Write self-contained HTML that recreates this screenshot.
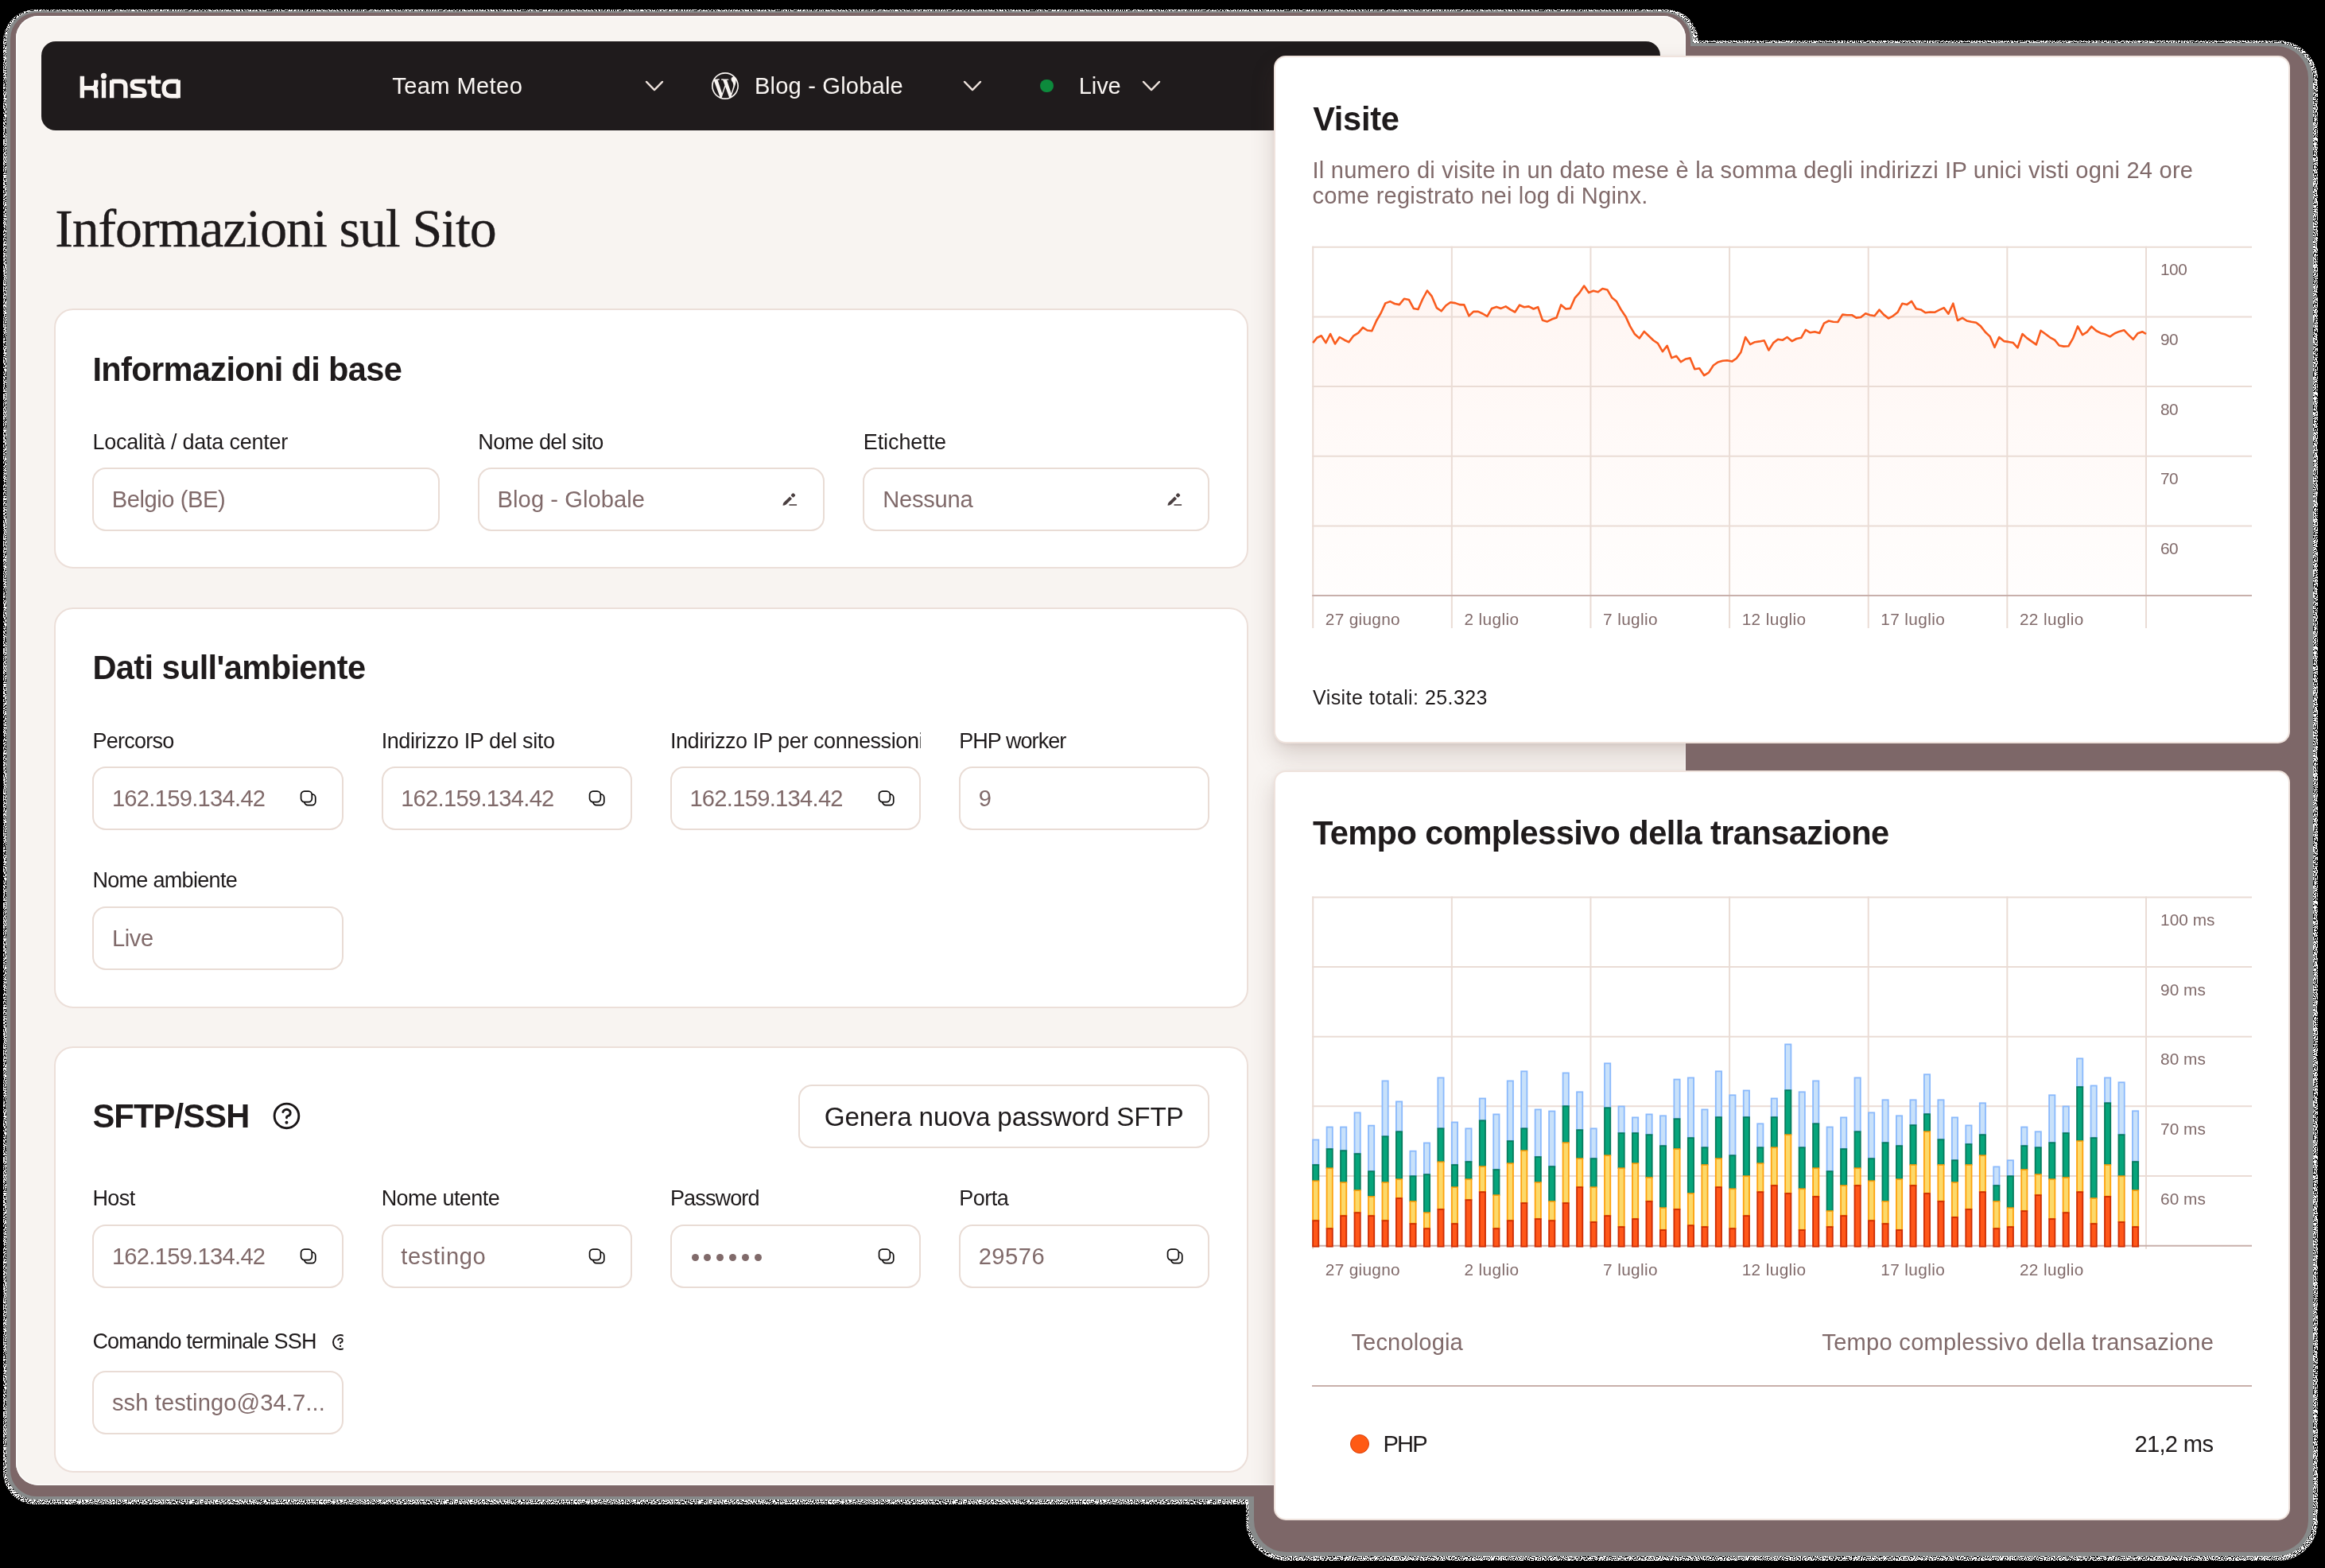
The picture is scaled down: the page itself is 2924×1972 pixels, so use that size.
<!DOCTYPE html><html><head><meta charset="utf-8"><title>Kinsta</title><style>
html,body{margin:0;padding:0;background:#000;}body{width:2924px;height:1972px;position:relative;overflow:hidden;font-family:"Liberation Sans",sans-serif;}
.a{position:absolute;display:block;box-sizing:border-box;}.t{position:absolute;white-space:nowrap;}#wrap{position:absolute;left:0;top:0;width:2924px;height:1972px;will-change:transform;}
.card{position:absolute;box-sizing:border-box;background:#fff;border:2px solid #ecdfd9;border-radius:24px;}
.inp{position:absolute;box-sizing:border-box;background:#fff;border:2px solid #e9dcd5;border-radius:17px;}
</style></head><body><div id="wrap">
<svg class="a" style="left:0;top:0" width="0" height="0"><filter id="nz" x="0" y="0" width="100%" height="100%" color-interpolation-filters="sRGB"><feTurbulence type="fractalNoise" baseFrequency="0.8" numOctaves="2" seed="7" result="t"/><feColorMatrix in="t" type="matrix" values="0 0 0 0 1 0 0 0 0 1 0 0 0 0 1 0 0 0 16 -7" result="m"/><feComposite in="m" in2="SourceGraphic" operator="in"/></filter></svg>
<div class="a" style="left:4px;top:12px;width:2132px;height:1880px;background:#fff;border-radius:40px;filter:url(#nz);"></div>
<div class="a" style="left:1567px;top:51px;width:1348px;height:1912px;background:#fff;border-radius:50px;filter:url(#nz);"></div>
<div class="a" style="left:8px;top:14px;width:2121px;height:1872px;background:#878a8a;border-radius:37px;"></div>
<div class="a" style="left:1570px;top:54px;width:1338.5px;height:1903px;background:#878a8a;border-radius:46px;"></div>
<div class="a" style="left:13px;top:16px;width:2113px;height:1866px;background:#7d6768;border-radius:33px;"></div>
<div class="a" style="left:1577px;top:58px;width:1326px;height:1894px;background:#7d6768;border-radius:40px;"></div>
<div class="a" id="panel" style="left:20px;top:20px;width:2100px;height:1848px;background:#f8f4f1;border-radius:28px;overflow:hidden;box-shadow:inset 0 0 0 1.5px #fdfcfb;">
<div class="a" id="pin" style="left:-20px;top:-20px;width:2924px;height:1972px;">
<div class="a" style="left:52px;top:52px;width:2036px;height:112px;background:#1f1b1c;border-radius:18px;"></div>
<svg class="a" style="left:90px;top:80px" width="150" height="56" viewBox="0 0 2325 868"><g fill="none" stroke="#f9f5f2" stroke-width="84" stroke-linecap="butt" stroke-linejoin="round"><path d="M207 245 V670"/><path d="M245 477 H395 Q477 477 477 395 V320"/><path d="M395 477 Q477 477 477 560 V670"/><path d="M628 320 V670"/><path d="M785 670 V320"/><path d="M785 345 H950 Q1052 345 1052 450 V670"/><path d="M1440 345 H1250 Q1180 345 1180 410 Q1180 470 1260 485 L1350 502 Q1425 517 1425 572 Q1425 630 1360 630 H1150"/><path d="M1595 235 V555 Q1595 630 1670 630 H1740"/><path d="M1480 355 H1740" stroke-width="72"/><path d="M2080 345 H1940 Q1800 345 1800 490 Q1800 632 1940 632 H2080"/><path d="M2080 320 V670"/></g><circle cx="628" cy="240" r="57" fill="#f9f5f2"/></svg>
<div class="t" style="left:493.30px;top:94.00px;font-size:29.12px;line-height:29.12px;color:#f9f5f2;font-family:'Liberation Sans',sans-serif;letter-spacing:0.374px;">Team Meteo</div>
<svg class="a" style="left:809.3px;top:98px" width="28" height="20" viewBox="-14 -10 28 20"><path d="M-10 -5.1 L0 5.1 L10 -5.1" fill="none" stroke="#eadfd9" stroke-width="2.4" stroke-linecap="round" stroke-linejoin="round"/></svg>
<svg class="a" style="left:895px;top:91px" width="34" height="34" viewBox="0 0 24 24"><path fill="#f9f5f2" d="M21.469 6.825c.84 1.537 1.318 3.3 1.318 5.175 0 3.979-2.156 7.456-5.363 9.325l3.295-9.527c.615-1.54.82-2.771.82-3.864 0-.405-.026-.78-.07-1.11m-7.981.105c.647-.03 1.232-.105 1.232-.105.582-.075.514-.93-.067-.899 0 0-1.755.135-2.88.135-1.064 0-2.85-.15-2.85-.15-.585-.03-.661.855-.075.885 0 0 .54.061 1.125.09l1.68 4.605-2.37 7.08L5.354 6.9c.649-.03 1.234-.1 1.234-.1.585-.075.516-.93-.065-.896 0 0-1.746.138-2.874.138-.2 0-.438-.008-.69-.015C4.911 3.15 8.235 1.215 12 1.215c2.809 0 5.365 1.072 7.286 2.833-.046-.003-.091-.009-.141-.009-1.06 0-1.812.923-1.812 1.914 0 .89.513 1.643 1.06 2.531.411.72.89 1.643.89 2.977 0 .915-.354 1.994-.821 3.479l-1.075 3.585-3.9-11.61.001.014zM12 22.784c-1.059 0-2.081-.153-3.048-.437l3.237-9.406 3.315 9.087c.024.053.05.101.078.149-1.12.393-2.325.609-3.582.609M1.211 12c0-1.564.336-3.05.935-4.39L7.29 21.709C3.694 19.96 1.212 16.271 1.211 12M12 0C5.385 0 0 5.385 0 12s5.385 12 12 12 12-5.385 12-12S18.615 0 12 0"/></svg>
<div class="t" style="left:949.00px;top:94.00px;font-size:29.12px;line-height:29.12px;color:#f9f5f2;font-family:'Liberation Sans',sans-serif;letter-spacing:0.173px;">Blog - Globale</div>
<svg class="a" style="left:1209.2px;top:98px" width="28" height="20" viewBox="-14 -10 28 20"><path d="M-10 -5.1 L0 5.1 L10 -5.1" fill="none" stroke="#eadfd9" stroke-width="2.4" stroke-linecap="round" stroke-linejoin="round"/></svg>
<div class="a" style="left:1308px;top:99.7px;width:16.6px;height:16.6px;background:#0d8a3c;border-radius:50%;"></div>
<div class="t" style="left:1356.70px;top:94.00px;font-size:29.12px;line-height:29.12px;color:#f9f5f2;font-family:'Liberation Sans',sans-serif;letter-spacing:-0.104px;">Live</div>
<svg class="a" style="left:1433.5px;top:98px" width="28" height="20" viewBox="-14 -10 28 20"><path d="M-10 -5.1 L0 5.1 L10 -5.1" fill="none" stroke="#eadfd9" stroke-width="2.4" stroke-linecap="round" stroke-linejoin="round"/></svg>
<div class="t" style="left:69.20px;top:253.01px;font-size:67.98px;line-height:67.98px;color:#1f1b1c;font-family:'Liberation Serif',serif;letter-spacing:-1.111px;-webkit-text-stroke:0.35px #1f1b1c;">Informazioni sul Sito</div>
<div class="card" style="left:68px;top:388px;width:1502px;height:327px;"></div>
<div class="t" style="left:116.40px;top:444.01px;font-size:41.6px;line-height:41.6px;color:#1f1b1c;font-family:'Liberation Sans',sans-serif;font-weight:700;letter-spacing:-0.663px;">Informazioni di base</div>
<div class="t" style="left:116.40px;top:543.01px;font-size:27.04px;line-height:27.04px;color:#1f1b1c;font-family:'Liberation Sans',sans-serif;letter-spacing:-0.239px;">Località / data center</div>
<div class="t" style="left:601.30px;top:543.01px;font-size:27.04px;line-height:27.04px;color:#1f1b1c;font-family:'Liberation Sans',sans-serif;letter-spacing:-0.599px;">Nome del sito</div>
<div class="t" style="left:1085.80px;top:543.01px;font-size:27.04px;line-height:27.04px;color:#1f1b1c;font-family:'Liberation Sans',sans-serif;letter-spacing:-0.11px;">Etichette</div>
<div class="inp" style="left:116.4px;top:588px;width:436.3px;height:80px;"></div>
<div class="inp" style="left:600.7px;top:588px;width:436.3px;height:80px;"></div>
<div class="inp" style="left:1085.0px;top:588px;width:436.3px;height:80px;"></div>
<div class="t" style="left:140.80px;top:614.00px;font-size:29.12px;line-height:29.12px;color:#806a6a;font-family:'Liberation Sans',sans-serif;letter-spacing:-0.435px;">Belgio (BE)</div>
<div class="t" style="left:625.60px;top:614.00px;font-size:29.12px;line-height:29.12px;color:#806a6a;font-family:'Liberation Sans',sans-serif;letter-spacing:0.073px;">Blog - Globale</div>
<div class="t" style="left:1110.20px;top:614.00px;font-size:29.12px;line-height:29.12px;color:#806a6a;font-family:'Liberation Sans',sans-serif;letter-spacing:-0.231px;">Nessuna</div>
<svg class="a" style="left:984.0px;top:619px" width="20" height="19" viewBox="0 0 20 19"><g fill="#4a3f40"><rect x="11.3" y="1.7" width="4.4" height="4.4" rx="1.1" transform="rotate(45 13.5 3.9)"/><path d="M9.3 5.5 L12 8.3 L4.7 15.4 Q2.8 16.8 0.5 16.8 Q0.5 14.6 1.6 13.0 Z"/><rect x="8.5" y="15.2" width="9.6" height="1.6"/></g></svg>
<svg class="a" style="left:1468.3px;top:619px" width="20" height="19" viewBox="0 0 20 19"><g fill="#4a3f40"><rect x="11.3" y="1.7" width="4.4" height="4.4" rx="1.1" transform="rotate(45 13.5 3.9)"/><path d="M9.3 5.5 L12 8.3 L4.7 15.4 Q2.8 16.8 0.5 16.8 Q0.5 14.6 1.6 13.0 Z"/><rect x="8.5" y="15.2" width="9.6" height="1.6"/></g></svg>
<div class="card" style="left:68px;top:764px;width:1502px;height:504px;"></div>
<div class="t" style="left:116.40px;top:819.01px;font-size:41.6px;line-height:41.6px;color:#1f1b1c;font-family:'Liberation Sans',sans-serif;font-weight:700;letter-spacing:-0.627px;">Dati sull'ambiente</div>
<div class="t" style="left:116.40px;top:919.01px;font-size:27.04px;line-height:27.04px;color:#1f1b1c;font-family:'Liberation Sans',sans-serif;letter-spacing:-0.74px;">Percorso</div>
<div class="t" style="left:479.65px;top:919.01px;font-size:27.04px;line-height:27.04px;color:#1f1b1c;font-family:'Liberation Sans',sans-serif;letter-spacing:-0.405px;">Indirizzo IP del sito</div>
<div class="t" style="left:842.90px;top:919.01px;font-size:27.04px;line-height:27.04px;color:#1f1b1c;font-family:'Liberation Sans',sans-serif;letter-spacing:-0.424px;width:315.25px;overflow:hidden;">Indirizzo IP per connessioni</div>
<div class="t" style="left:1206.15px;top:919.01px;font-size:27.04px;line-height:27.04px;color:#1f1b1c;font-family:'Liberation Sans',sans-serif;letter-spacing:-0.953px;">PHP worker</div>
<div class="inp" style="left:116.4px;top:964px;width:315.25px;height:80px;"></div>
<div class="inp" style="left:479.65px;top:964px;width:315.25px;height:80px;"></div>
<div class="inp" style="left:842.9px;top:964px;width:315.25px;height:80px;"></div>
<div class="inp" style="left:1206.15px;top:964px;width:315.25px;height:80px;"></div>
<div class="t" style="left:140.90px;top:990.00px;font-size:29.12px;line-height:29.12px;color:#806a6a;font-family:'Liberation Sans',sans-serif;letter-spacing:-0.706px;">162.159.134.42</div>
<svg class="a" style="left:377.0px;top:993px" width="22" height="22" viewBox="0 0 22 22"><g fill="#fff" stroke="#0d0b0b" stroke-width="1.7"><rect x="5.8" y="5.95" width="13.95" height="13.7" rx="4.3"/><rect x="1.55" y="2.05" width="13.75" height="13.6" rx="4.3"/></g></svg>
<div class="t" style="left:504.15px;top:990.00px;font-size:29.12px;line-height:29.12px;color:#806a6a;font-family:'Liberation Sans',sans-serif;letter-spacing:-0.706px;">162.159.134.42</div>
<svg class="a" style="left:740.25px;top:993px" width="22" height="22" viewBox="0 0 22 22"><g fill="#fff" stroke="#0d0b0b" stroke-width="1.7"><rect x="5.8" y="5.95" width="13.95" height="13.7" rx="4.3"/><rect x="1.55" y="2.05" width="13.75" height="13.6" rx="4.3"/></g></svg>
<div class="t" style="left:867.40px;top:990.00px;font-size:29.12px;line-height:29.12px;color:#806a6a;font-family:'Liberation Sans',sans-serif;letter-spacing:-0.706px;">162.159.134.42</div>
<svg class="a" style="left:1103.5px;top:993px" width="22" height="22" viewBox="0 0 22 22"><g fill="#fff" stroke="#0d0b0b" stroke-width="1.7"><rect x="5.8" y="5.95" width="13.95" height="13.7" rx="4.3"/><rect x="1.55" y="2.05" width="13.75" height="13.6" rx="4.3"/></g></svg>
<div class="t" style="left:1230.65px;top:990.00px;font-size:29.12px;line-height:29.12px;color:#806a6a;font-family:'Liberation Sans',sans-serif;letter-spacing:-0.623px;">9</div>
<div class="t" style="left:116.40px;top:1094.01px;font-size:27.04px;line-height:27.04px;color:#1f1b1c;font-family:'Liberation Sans',sans-serif;letter-spacing:-0.705px;">Nome ambiente</div>
<div class="inp" style="left:116.4px;top:1140px;width:315.25px;height:80px;"></div>
<div class="t" style="left:140.90px;top:1166.00px;font-size:29.12px;line-height:29.12px;color:#806a6a;font-family:'Liberation Sans',sans-serif;letter-spacing:-0.374px;">Live</div>
<div class="card" style="left:68px;top:1316px;width:1502px;height:536px;"></div>
<div class="t" style="left:116.40px;top:1383.01px;font-size:41.6px;line-height:41.6px;color:#1f1b1c;font-family:'Liberation Sans',sans-serif;font-weight:700;letter-spacing:-0.798px;">SFTP/SSH</div>
<svg class="a" style="left:339.63px;top:1383.43px;" width="40.93" height="40.93" viewBox="-128 -128 256 256" fill="none" stroke="#1a1617" stroke-width="18.14" stroke-linecap="round" stroke-linejoin="round"><circle cx="0" cy="0" r="96"/><path d="M-29 -31A30 27 0 1 1 20 -4C8 1 0 0 0 9L0 14"/><circle cx="0" cy="52" r="12.5" fill="#1a1617" stroke="none"/></svg>
<div class="inp" style="left:1004px;top:1364px;width:517.4px;height:80px;border-radius:17px;"></div>
<div class="t" style="left:1036.70px;top:1388.00px;font-size:33.28px;line-height:33.28px;color:#1f1b1c;font-family:'Liberation Sans',sans-serif;letter-spacing:-0.186px;">Genera nuova password SFTP</div>
<div class="t" style="left:116.40px;top:1494.01px;font-size:27.04px;line-height:27.04px;color:#1f1b1c;font-family:'Liberation Sans',sans-serif;letter-spacing:-0.585px;">Host</div>
<div class="t" style="left:479.65px;top:1494.01px;font-size:27.04px;line-height:27.04px;color:#1f1b1c;font-family:'Liberation Sans',sans-serif;letter-spacing:-0.561px;">Nome utente</div>
<div class="t" style="left:842.90px;top:1494.01px;font-size:27.04px;line-height:27.04px;color:#1f1b1c;font-family:'Liberation Sans',sans-serif;letter-spacing:-0.861px;">Password</div>
<div class="t" style="left:1206.15px;top:1494.01px;font-size:27.04px;line-height:27.04px;color:#1f1b1c;font-family:'Liberation Sans',sans-serif;letter-spacing:-0.507px;">Porta</div>
<div class="inp" style="left:116.4px;top:1540px;width:315.25px;height:80px;"></div>
<div class="inp" style="left:479.65px;top:1540px;width:315.25px;height:80px;"></div>
<div class="inp" style="left:842.9px;top:1540px;width:315.25px;height:80px;"></div>
<div class="inp" style="left:1206.15px;top:1540px;width:315.25px;height:80px;"></div>
<div class="t" style="left:140.90px;top:1566.00px;font-size:29.12px;line-height:29.12px;color:#806a6a;font-family:'Liberation Sans',sans-serif;letter-spacing:-0.706px;">162.159.134.42</div>
<div class="t" style="left:504.15px;top:1566.00px;font-size:29.12px;line-height:29.12px;color:#806a6a;font-family:'Liberation Sans',sans-serif;letter-spacing:0.67px;">testingo</div>
<div class="a" style="left:869.6px;top:1577.3px;width:9px;height:9px;background:#806a6a;border-radius:50%;"></div>
<div class="a" style="left:885.44px;top:1577.3px;width:9px;height:9px;background:#806a6a;border-radius:50%;"></div>
<div class="a" style="left:901.28px;top:1577.3px;width:9px;height:9px;background:#806a6a;border-radius:50%;"></div>
<div class="a" style="left:917.12px;top:1577.3px;width:9px;height:9px;background:#806a6a;border-radius:50%;"></div>
<div class="a" style="left:932.96px;top:1577.3px;width:9px;height:9px;background:#806a6a;border-radius:50%;"></div>
<div class="a" style="left:948.8000000000001px;top:1577.3px;width:9px;height:9px;background:#806a6a;border-radius:50%;"></div>
<div class="t" style="left:1230.65px;top:1566.00px;font-size:29.12px;line-height:29.12px;color:#806a6a;font-family:'Liberation Sans',sans-serif;letter-spacing:0.537px;">29576</div>
<svg class="a" style="left:377.0px;top:1568.5px" width="22" height="22" viewBox="0 0 22 22"><g fill="#fff" stroke="#0d0b0b" stroke-width="1.7"><rect x="5.8" y="5.95" width="13.95" height="13.7" rx="4.3"/><rect x="1.55" y="2.05" width="13.75" height="13.6" rx="4.3"/></g></svg>
<svg class="a" style="left:740.25px;top:1568.5px" width="22" height="22" viewBox="0 0 22 22"><g fill="#fff" stroke="#0d0b0b" stroke-width="1.7"><rect x="5.8" y="5.95" width="13.95" height="13.7" rx="4.3"/><rect x="1.55" y="2.05" width="13.75" height="13.6" rx="4.3"/></g></svg>
<svg class="a" style="left:1103.5px;top:1568.5px" width="22" height="22" viewBox="0 0 22 22"><g fill="#fff" stroke="#0d0b0b" stroke-width="1.7"><rect x="5.8" y="5.95" width="13.95" height="13.7" rx="4.3"/><rect x="1.55" y="2.05" width="13.75" height="13.6" rx="4.3"/></g></svg>
<svg class="a" style="left:1466.75px;top:1568.5px" width="22" height="22" viewBox="0 0 22 22"><g fill="#fff" stroke="#0d0b0b" stroke-width="1.7"><rect x="5.8" y="5.95" width="13.95" height="13.7" rx="4.3"/><rect x="1.55" y="2.05" width="13.75" height="13.6" rx="4.3"/></g></svg>
<div class="t" style="left:116.40px;top:1674.01px;font-size:27.04px;line-height:27.04px;color:#1f1b1c;font-family:'Liberation Sans',sans-serif;letter-spacing:-0.848px;">Comando terminale SSH</div>
<svg class="a" style="left:415.90px;top:1675.85px;clip-path:inset(0 8.20px 0 0);" width="24.00" height="24.00" viewBox="-128 -128 256 256" fill="none" stroke="#1a1617" stroke-width="21.33" stroke-linecap="round" stroke-linejoin="round"><circle cx="0" cy="0" r="96"/><path d="M-29 -31A30 27 0 1 1 20 -4C8 1 0 0 0 9L0 14"/><circle cx="0" cy="52" r="12.5" fill="#1a1617" stroke="none"/></svg>
<div class="inp" style="left:116.4px;top:1723.7px;width:315.25px;height:80px;"></div>
<div class="t" style="left:140.90px;top:1750.00px;font-size:29.12px;line-height:29.12px;color:#806a6a;font-family:'Liberation Sans',sans-serif;letter-spacing:0.109px;">ssh testingo@34.7...</div>
</div></div>
<div class="a" style="left:20px;top:20px;width:2100px;height:1848px;border-radius:28px;overflow:hidden;pointer-events:none;">
<div class="a" style="left:-20px;top:-20px;width:2924px;height:1972px;">
<div class="a" style="left:1603px;top:71px;width:1276px;height:863px;border-radius:14px;box-shadow:0 14px 30px rgba(96,62,56,0.22),0 2px 6px rgba(96,62,56,0.10);"></div>
<div class="a" style="left:1603px;top:970px;width:1276px;height:941px;border-radius:14px;box-shadow:0 14px 30px rgba(96,62,56,0.22),0 2px 6px rgba(96,62,56,0.10);"></div>
</div></div>
<div class="card" style="left:1602px;top:70px;width:1278px;height:865px;border-color:#efe3dd;border-radius:15px;"></div>
<div class="card" style="left:1602px;top:969px;width:1278px;height:943px;border-color:#efe3dd;border-radius:15px;"></div>
<div class="t" style="left:1651.20px;top:129.01px;font-size:41.6px;line-height:41.6px;color:#1f1b1c;font-family:'Liberation Sans',sans-serif;font-weight:700;letter-spacing:-0.307px;">Visite</div>
<div class="t" style="left:1650.50px;top:200.00px;font-size:29.12px;line-height:29.12px;color:#806a6a;font-family:'Liberation Sans',sans-serif;letter-spacing:0.199px;">Il numero di visite in un dato mese è la somma degli indirizzi IP unici visti ogni 24 ore</div>
<div class="t" style="left:1650.50px;top:232.00px;font-size:29.12px;line-height:29.12px;color:#806a6a;font-family:'Liberation Sans',sans-serif;letter-spacing:0.185px;">come registrato nei log di Nginx.</div>
<svg class="a" style="left:0;top:0" width="2924" height="1972" viewBox="0 0 2924 1972">
<defs><linearGradient id="lg" x1="0" y1="0" x2="0" y2="1"><stop offset="0" stop-color="#ff5a1f" stop-opacity="0.055"/><stop offset="1" stop-color="#ff5a1f" stop-opacity="0.01"/></linearGradient></defs>
<polygon points="1651.2,431.1 1656.3,424.8 1661.7,422.3 1667.4,431.1 1673.1,420.0 1679.0,432.5 1684.7,424.0 1691.0,427.7 1696.4,430.2 1702.3,422.3 1708.3,418.6 1714.0,411.8 1719.6,415.5 1725.3,416.3 1731.0,403.5 1736.4,394.2 1742.3,381.4 1748.3,379.1 1754.0,382.0 1759.9,383.1 1765.9,375.7 1771.9,376.9 1777.8,387.9 1783.5,389.1 1789.2,376.0 1794.9,365.5 1800.5,372.3 1806.8,387.1 1812.7,391.3 1818.4,384.2 1824.1,380.3 1830.1,381.1 1835.7,383.1 1841.4,383.4 1847.4,397.3 1853.1,391.9 1859.0,391.9 1864.7,394.5 1870.4,397.9 1876.1,387.9 1882.0,385.9 1887.7,387.9 1893.7,385.4 1899.6,389.4 1905.3,392.5 1911.0,383.7 1916.9,386.2 1922.6,385.4 1928.6,388.5 1934.2,386.2 1939.9,402.7 1945.9,404.4 1951.6,401.6 1957.5,399.6 1963.2,383.4 1969.2,388.5 1974.8,387.9 1980.5,374.9 1986.5,368.1 1992.2,359.5 1998.1,368.1 2003.8,365.8 2009.8,367.2 2015.4,363.0 2021.4,364.4 2027.4,374.6 2033.0,379.1 2038.7,389.6 2044.4,397.9 2050.1,410.4 2056.0,420.3 2061.7,425.4 2067.7,416.9 2073.3,422.3 2079.3,428.0 2085.0,431.9 2090.9,442.2 2096.6,434.8 2102.3,450.1 2108.3,447.8 2113.9,455.2 2119.9,451.5 2125.6,450.4 2131.3,464.3 2137.2,463.2 2143.2,472.2 2148.9,468.6 2154.8,459.5 2160.5,455.5 2166.5,453.8 2172.1,453.2 2178.1,454.6 2183.8,450.7 2189.4,443.0 2195.1,424.0 2201.1,433.1 2207.0,430.2 2212.7,429.4 2218.7,428.2 2224.4,440.5 2230.3,431.1 2236.0,426.8 2242.0,427.7 2247.6,424.0 2253.6,429.1 2259.3,426.0 2265.2,424.8 2270.9,414.9 2276.6,418.3 2282.3,417.2 2288.3,418.9 2293.9,406.7 2299.9,403.5 2305.6,404.7 2311.3,405.0 2317.2,395.6 2322.9,396.2 2328.9,396.2 2334.5,399.6 2340.2,399.0 2346.2,394.2 2351.8,396.2 2357.5,397.3 2363.5,389.6 2369.2,395.9 2375.1,400.4 2380.8,397.3 2386.5,392.8 2392.4,381.7 2398.1,383.1 2404.1,378.9 2409.8,388.2 2415.7,389.4 2421.4,393.3 2427.4,392.5 2433.0,392.8 2438.7,389.9 2444.7,387.1 2450.4,394.7 2456.3,381.7 2462.0,403.0 2468.0,399.9 2473.6,403.5 2479.3,404.7 2485.3,405.8 2490.9,410.1 2496.9,417.7 2502.6,423.1 2508.5,436.8 2514.2,424.0 2520.2,429.1 2525.9,429.9 2531.8,431.1 2537.5,437.3 2543.5,420.0 2549.1,425.1 2555.1,429.4 2560.8,433.4 2566.5,415.8 2572.4,420.0 2578.1,424.3 2584.1,427.7 2589.7,434.5 2595.4,435.6 2601.4,435.3 2607.0,425.7 2613.0,410.4 2619.0,421.1 2624.6,417.7 2630.3,410.6 2636.3,416.0 2642.0,418.9 2647.6,420.6 2653.6,423.4 2659.6,419.2 2665.2,416.9 2671.2,415.2 2676.9,421.1 2682.8,426.8 2688.5,419.2 2694.2,417.2 2699.0,420.0 2699,749.0 1651.2,749.0" fill="url(#lg)"/>
<line x1="1650.2" y1="310.80" x2="2832" y2="310.80" stroke="#eadcd5" stroke-width="2"/><line x1="1650.2" y1="398.45" x2="2832" y2="398.45" stroke="#eadcd5" stroke-width="2"/><line x1="1650.2" y1="486.10" x2="2832" y2="486.10" stroke="#eadcd5" stroke-width="2"/><line x1="1650.2" y1="573.75" x2="2832" y2="573.75" stroke="#eadcd5" stroke-width="2"/><line x1="1650.2" y1="661.40" x2="2832" y2="661.40" stroke="#eadcd5" stroke-width="2"/><line x1="1651.20" y1="309.80" x2="1651.20" y2="790.05" stroke="#eadcd5" stroke-width="2"/><line x1="1825.83" y1="309.80" x2="1825.83" y2="790.05" stroke="#eadcd5" stroke-width="2"/><line x1="2000.46" y1="309.80" x2="2000.46" y2="790.05" stroke="#eadcd5" stroke-width="2"/><line x1="2175.09" y1="309.80" x2="2175.09" y2="790.05" stroke="#eadcd5" stroke-width="2"/><line x1="2349.72" y1="309.80" x2="2349.72" y2="790.05" stroke="#eadcd5" stroke-width="2"/><line x1="2524.35" y1="309.80" x2="2524.35" y2="790.05" stroke="#eadcd5" stroke-width="2"/><line x1="2698.98" y1="309.80" x2="2698.98" y2="790.05" stroke="#eadcd5" stroke-width="2"/><line x1="1650.2" y1="749.05" x2="2832" y2="749.05" stroke="#c8b0ab" stroke-width="2"/>
<polyline points="1651.2,431.1 1656.3,424.8 1661.7,422.3 1667.4,431.1 1673.1,420.0 1679.0,432.5 1684.7,424.0 1691.0,427.7 1696.4,430.2 1702.3,422.3 1708.3,418.6 1714.0,411.8 1719.6,415.5 1725.3,416.3 1731.0,403.5 1736.4,394.2 1742.3,381.4 1748.3,379.1 1754.0,382.0 1759.9,383.1 1765.9,375.7 1771.9,376.9 1777.8,387.9 1783.5,389.1 1789.2,376.0 1794.9,365.5 1800.5,372.3 1806.8,387.1 1812.7,391.3 1818.4,384.2 1824.1,380.3 1830.1,381.1 1835.7,383.1 1841.4,383.4 1847.4,397.3 1853.1,391.9 1859.0,391.9 1864.7,394.5 1870.4,397.9 1876.1,387.9 1882.0,385.9 1887.7,387.9 1893.7,385.4 1899.6,389.4 1905.3,392.5 1911.0,383.7 1916.9,386.2 1922.6,385.4 1928.6,388.5 1934.2,386.2 1939.9,402.7 1945.9,404.4 1951.6,401.6 1957.5,399.6 1963.2,383.4 1969.2,388.5 1974.8,387.9 1980.5,374.9 1986.5,368.1 1992.2,359.5 1998.1,368.1 2003.8,365.8 2009.8,367.2 2015.4,363.0 2021.4,364.4 2027.4,374.6 2033.0,379.1 2038.7,389.6 2044.4,397.9 2050.1,410.4 2056.0,420.3 2061.7,425.4 2067.7,416.9 2073.3,422.3 2079.3,428.0 2085.0,431.9 2090.9,442.2 2096.6,434.8 2102.3,450.1 2108.3,447.8 2113.9,455.2 2119.9,451.5 2125.6,450.4 2131.3,464.3 2137.2,463.2 2143.2,472.2 2148.9,468.6 2154.8,459.5 2160.5,455.5 2166.5,453.8 2172.1,453.2 2178.1,454.6 2183.8,450.7 2189.4,443.0 2195.1,424.0 2201.1,433.1 2207.0,430.2 2212.7,429.4 2218.7,428.2 2224.4,440.5 2230.3,431.1 2236.0,426.8 2242.0,427.7 2247.6,424.0 2253.6,429.1 2259.3,426.0 2265.2,424.8 2270.9,414.9 2276.6,418.3 2282.3,417.2 2288.3,418.9 2293.9,406.7 2299.9,403.5 2305.6,404.7 2311.3,405.0 2317.2,395.6 2322.9,396.2 2328.9,396.2 2334.5,399.6 2340.2,399.0 2346.2,394.2 2351.8,396.2 2357.5,397.3 2363.5,389.6 2369.2,395.9 2375.1,400.4 2380.8,397.3 2386.5,392.8 2392.4,381.7 2398.1,383.1 2404.1,378.9 2409.8,388.2 2415.7,389.4 2421.4,393.3 2427.4,392.5 2433.0,392.8 2438.7,389.9 2444.7,387.1 2450.4,394.7 2456.3,381.7 2462.0,403.0 2468.0,399.9 2473.6,403.5 2479.3,404.7 2485.3,405.8 2490.9,410.1 2496.9,417.7 2502.6,423.1 2508.5,436.8 2514.2,424.0 2520.2,429.1 2525.9,429.9 2531.8,431.1 2537.5,437.3 2543.5,420.0 2549.1,425.1 2555.1,429.4 2560.8,433.4 2566.5,415.8 2572.4,420.0 2578.1,424.3 2584.1,427.7 2589.7,434.5 2595.4,435.6 2601.4,435.3 2607.0,425.7 2613.0,410.4 2619.0,421.1 2624.6,417.7 2630.3,410.6 2636.3,416.0 2642.0,418.9 2647.6,420.6 2653.6,423.4 2659.6,419.2 2665.2,416.9 2671.2,415.2 2676.9,421.1 2682.8,426.8 2688.5,419.2 2694.2,417.2 2699.0,420.0" fill="none" stroke="#f95c1e" stroke-width="2.6" stroke-linejoin="round" stroke-linecap="butt"/>
<line x1="1650.2" y1="1128.40" x2="2832" y2="1128.40" stroke="#eadcd5" stroke-width="2"/><line x1="1650.2" y1="1216.05" x2="2832" y2="1216.05" stroke="#eadcd5" stroke-width="2"/><line x1="1650.2" y1="1303.70" x2="2832" y2="1303.70" stroke="#eadcd5" stroke-width="2"/><line x1="1650.2" y1="1391.35" x2="2832" y2="1391.35" stroke="#eadcd5" stroke-width="2"/><line x1="1650.2" y1="1479.00" x2="2832" y2="1479.00" stroke="#eadcd5" stroke-width="2"/><line x1="1651.20" y1="1127.40" x2="1651.20" y2="1570.65" stroke="#eadcd5" stroke-width="2"/><line x1="1825.83" y1="1127.40" x2="1825.83" y2="1570.65" stroke="#eadcd5" stroke-width="2"/><line x1="2000.46" y1="1127.40" x2="2000.46" y2="1570.65" stroke="#eadcd5" stroke-width="2"/><line x1="2175.09" y1="1127.40" x2="2175.09" y2="1570.65" stroke="#eadcd5" stroke-width="2"/><line x1="2349.72" y1="1127.40" x2="2349.72" y2="1570.65" stroke="#eadcd5" stroke-width="2"/><line x1="2524.35" y1="1127.40" x2="2524.35" y2="1570.65" stroke="#eadcd5" stroke-width="2"/><line x1="2698.98" y1="1127.40" x2="2698.98" y2="1570.65" stroke="#eadcd5" stroke-width="2"/><line x1="1650.2" y1="1566.65" x2="2832" y2="1566.65" stroke="#c8b0ab" stroke-width="2"/>
<rect x="1651.10" y="1433.50" width="7.25" height="31.19" fill="#c8e1fa" stroke="#8ab9fc" stroke-width="1.8"/>
<rect x="1651.10" y="1465.09" width="7.25" height="19.81" fill="#06a57b" stroke="#067b5d" stroke-width="1.8"/>
<rect x="1651.10" y="1485.30" width="7.25" height="49.53" fill="#fcd96a" stroke="#fda20e" stroke-width="1.8"/>
<rect x="1651.10" y="1535.23" width="7.25" height="32.47" fill="#ff5719" stroke="#cd2c02" stroke-width="1.8"/>
<rect x="1668.57" y="1417.48" width="7.25" height="27.24" fill="#c8e1fa" stroke="#8ab9fc" stroke-width="1.8"/>
<rect x="1668.57" y="1445.12" width="7.25" height="23.75" fill="#06a57b" stroke="#067b5d" stroke-width="1.8"/>
<rect x="1668.57" y="1469.27" width="7.25" height="75.55" fill="#fcd96a" stroke="#fda20e" stroke-width="1.8"/>
<rect x="1668.57" y="1545.22" width="7.25" height="22.48" fill="#ff5719" stroke="#cd2c02" stroke-width="1.8"/>
<rect x="1686.04" y="1417.48" width="7.25" height="29.33" fill="#c8e1fa" stroke="#8ab9fc" stroke-width="1.8"/>
<rect x="1686.04" y="1447.21" width="7.25" height="39.55" fill="#06a57b" stroke="#067b5d" stroke-width="1.8"/>
<rect x="1686.04" y="1487.16" width="7.25" height="41.64" fill="#fcd96a" stroke="#fda20e" stroke-width="1.8"/>
<rect x="1686.04" y="1529.19" width="7.25" height="38.51" fill="#ff5719" stroke="#cd2c02" stroke-width="1.8"/>
<rect x="1703.52" y="1399.36" width="7.25" height="51.39" fill="#c8e1fa" stroke="#8ab9fc" stroke-width="1.8"/>
<rect x="1703.52" y="1451.16" width="7.25" height="45.59" fill="#06a57b" stroke="#067b5d" stroke-width="1.8"/>
<rect x="1703.52" y="1497.14" width="7.25" height="27.70" fill="#fcd96a" stroke="#fda20e" stroke-width="1.8"/>
<rect x="1703.52" y="1525.25" width="7.25" height="42.45" fill="#ff5719" stroke="#cd2c02" stroke-width="1.8"/>
<rect x="1720.99" y="1415.62" width="7.25" height="57.20" fill="#c8e1fa" stroke="#8ab9fc" stroke-width="1.8"/>
<rect x="1720.99" y="1473.22" width="7.25" height="31.42" fill="#06a57b" stroke="#067b5d" stroke-width="1.8"/>
<rect x="1720.99" y="1505.04" width="7.25" height="23.75" fill="#fcd96a" stroke="#fda20e" stroke-width="1.8"/>
<rect x="1720.99" y="1529.19" width="7.25" height="38.51" fill="#ff5719" stroke="#cd2c02" stroke-width="1.8"/>
<rect x="1738.46" y="1359.42" width="7.25" height="69.51" fill="#c8e1fa" stroke="#8ab9fc" stroke-width="1.8"/>
<rect x="1738.46" y="1429.32" width="7.25" height="57.43" fill="#06a57b" stroke="#067b5d" stroke-width="1.8"/>
<rect x="1738.46" y="1487.16" width="7.25" height="47.68" fill="#fcd96a" stroke="#fda20e" stroke-width="1.8"/>
<rect x="1738.46" y="1535.23" width="7.25" height="32.47" fill="#ff5719" stroke="#cd2c02" stroke-width="1.8"/>
<rect x="1755.93" y="1385.43" width="7.25" height="37.46" fill="#c8e1fa" stroke="#8ab9fc" stroke-width="1.8"/>
<rect x="1755.93" y="1423.29" width="7.25" height="59.52" fill="#06a57b" stroke="#067b5d" stroke-width="1.8"/>
<rect x="1755.93" y="1483.21" width="7.25" height="23.52" fill="#fcd96a" stroke="#fda20e" stroke-width="1.8"/>
<rect x="1755.93" y="1507.13" width="7.25" height="60.57" fill="#ff5719" stroke="#cd2c02" stroke-width="1.8"/>
<rect x="1773.40" y="1447.67" width="7.25" height="31.19" fill="#c8e1fa" stroke="#8ab9fc" stroke-width="1.8"/>
<rect x="1773.40" y="1479.26" width="7.25" height="31.42" fill="#06a57b" stroke="#067b5d" stroke-width="1.8"/>
<rect x="1773.40" y="1511.08" width="7.25" height="27.70" fill="#fcd96a" stroke="#fda20e" stroke-width="1.8"/>
<rect x="1773.40" y="1539.18" width="7.25" height="28.52" fill="#ff5719" stroke="#cd2c02" stroke-width="1.8"/>
<rect x="1790.88" y="1437.45" width="7.25" height="39.32" fill="#c8e1fa" stroke="#8ab9fc" stroke-width="1.8"/>
<rect x="1790.88" y="1477.17" width="7.25" height="47.68" fill="#06a57b" stroke="#067b5d" stroke-width="1.8"/>
<rect x="1790.88" y="1525.25" width="7.25" height="19.57" fill="#fcd96a" stroke="#fda20e" stroke-width="1.8"/>
<rect x="1790.88" y="1545.22" width="7.25" height="22.48" fill="#ff5719" stroke="#cd2c02" stroke-width="1.8"/>
<rect x="1808.35" y="1355.47" width="7.25" height="63.47" fill="#c8e1fa" stroke="#8ab9fc" stroke-width="1.8"/>
<rect x="1808.35" y="1419.34" width="7.25" height="41.64" fill="#06a57b" stroke="#067b5d" stroke-width="1.8"/>
<rect x="1808.35" y="1461.38" width="7.25" height="59.29" fill="#fcd96a" stroke="#fda20e" stroke-width="1.8"/>
<rect x="1808.35" y="1521.07" width="7.25" height="46.63" fill="#ff5719" stroke="#cd2c02" stroke-width="1.8"/>
<rect x="1825.82" y="1411.44" width="7.25" height="53.25" fill="#c8e1fa" stroke="#8ab9fc" stroke-width="1.8"/>
<rect x="1825.82" y="1465.09" width="7.25" height="27.70" fill="#06a57b" stroke="#067b5d" stroke-width="1.8"/>
<rect x="1825.82" y="1493.19" width="7.25" height="45.59" fill="#fcd96a" stroke="#fda20e" stroke-width="1.8"/>
<rect x="1825.82" y="1539.18" width="7.25" height="28.52" fill="#ff5719" stroke="#cd2c02" stroke-width="1.8"/>
<rect x="1843.29" y="1419.34" width="7.25" height="41.41" fill="#c8e1fa" stroke="#8ab9fc" stroke-width="1.8"/>
<rect x="1843.29" y="1461.14" width="7.25" height="21.66" fill="#06a57b" stroke="#067b5d" stroke-width="1.8"/>
<rect x="1843.29" y="1483.21" width="7.25" height="25.61" fill="#fcd96a" stroke="#fda20e" stroke-width="1.8"/>
<rect x="1843.29" y="1509.22" width="7.25" height="58.48" fill="#ff5719" stroke="#cd2c02" stroke-width="1.8"/>
<rect x="1860.76" y="1381.48" width="7.25" height="27.47" fill="#c8e1fa" stroke="#8ab9fc" stroke-width="1.8"/>
<rect x="1860.76" y="1409.35" width="7.25" height="57.43" fill="#06a57b" stroke="#067b5d" stroke-width="1.8"/>
<rect x="1860.76" y="1467.18" width="7.25" height="31.65" fill="#fcd96a" stroke="#fda20e" stroke-width="1.8"/>
<rect x="1860.76" y="1499.23" width="7.25" height="68.47" fill="#ff5719" stroke="#cd2c02" stroke-width="1.8"/>
<rect x="1878.24" y="1401.45" width="7.25" height="69.28" fill="#c8e1fa" stroke="#8ab9fc" stroke-width="1.8"/>
<rect x="1878.24" y="1471.13" width="7.25" height="31.65" fill="#06a57b" stroke="#067b5d" stroke-width="1.8"/>
<rect x="1878.24" y="1503.18" width="7.25" height="41.64" fill="#fcd96a" stroke="#fda20e" stroke-width="1.8"/>
<rect x="1878.24" y="1545.22" width="7.25" height="22.48" fill="#ff5719" stroke="#cd2c02" stroke-width="1.8"/>
<rect x="1895.71" y="1359.42" width="7.25" height="75.32" fill="#c8e1fa" stroke="#8ab9fc" stroke-width="1.8"/>
<rect x="1895.71" y="1435.13" width="7.25" height="27.70" fill="#06a57b" stroke="#067b5d" stroke-width="1.8"/>
<rect x="1895.71" y="1463.23" width="7.25" height="71.60" fill="#fcd96a" stroke="#fda20e" stroke-width="1.8"/>
<rect x="1895.71" y="1535.23" width="7.25" height="32.47" fill="#ff5719" stroke="#cd2c02" stroke-width="1.8"/>
<rect x="1913.18" y="1347.34" width="7.25" height="71.60" fill="#c8e1fa" stroke="#8ab9fc" stroke-width="1.8"/>
<rect x="1913.18" y="1419.34" width="7.25" height="27.47" fill="#06a57b" stroke="#067b5d" stroke-width="1.8"/>
<rect x="1913.18" y="1447.21" width="7.25" height="65.56" fill="#fcd96a" stroke="#fda20e" stroke-width="1.8"/>
<rect x="1913.18" y="1513.17" width="7.25" height="54.53" fill="#ff5719" stroke="#cd2c02" stroke-width="1.8"/>
<rect x="1930.65" y="1395.42" width="7.25" height="59.29" fill="#c8e1fa" stroke="#8ab9fc" stroke-width="1.8"/>
<rect x="1930.65" y="1455.10" width="7.25" height="31.65" fill="#06a57b" stroke="#067b5d" stroke-width="1.8"/>
<rect x="1930.65" y="1487.16" width="7.25" height="45.59" fill="#fcd96a" stroke="#fda20e" stroke-width="1.8"/>
<rect x="1930.65" y="1533.14" width="7.25" height="34.56" fill="#ff5719" stroke="#cd2c02" stroke-width="1.8"/>
<rect x="1948.12" y="1397.51" width="7.25" height="69.28" fill="#c8e1fa" stroke="#8ab9fc" stroke-width="1.8"/>
<rect x="1948.12" y="1467.18" width="7.25" height="43.50" fill="#06a57b" stroke="#067b5d" stroke-width="1.8"/>
<rect x="1948.12" y="1511.08" width="7.25" height="23.75" fill="#fcd96a" stroke="#fda20e" stroke-width="1.8"/>
<rect x="1948.12" y="1535.23" width="7.25" height="32.47" fill="#ff5719" stroke="#cd2c02" stroke-width="1.8"/>
<rect x="1965.60" y="1349.43" width="7.25" height="41.41" fill="#c8e1fa" stroke="#8ab9fc" stroke-width="1.8"/>
<rect x="1965.60" y="1391.23" width="7.25" height="45.59" fill="#06a57b" stroke="#067b5d" stroke-width="1.8"/>
<rect x="1965.60" y="1437.22" width="7.25" height="75.55" fill="#fcd96a" stroke="#fda20e" stroke-width="1.8"/>
<rect x="1965.60" y="1513.17" width="7.25" height="54.53" fill="#ff5719" stroke="#cd2c02" stroke-width="1.8"/>
<rect x="1983.07" y="1373.35" width="7.25" height="47.44" fill="#c8e1fa" stroke="#8ab9fc" stroke-width="1.8"/>
<rect x="1983.07" y="1421.20" width="7.25" height="35.60" fill="#06a57b" stroke="#067b5d" stroke-width="1.8"/>
<rect x="1983.07" y="1457.20" width="7.25" height="35.60" fill="#fcd96a" stroke="#fda20e" stroke-width="1.8"/>
<rect x="1983.07" y="1493.19" width="7.25" height="74.51" fill="#ff5719" stroke="#cd2c02" stroke-width="1.8"/>
<rect x="2000.54" y="1419.34" width="7.25" height="37.46" fill="#c8e1fa" stroke="#8ab9fc" stroke-width="1.8"/>
<rect x="2000.54" y="1457.20" width="7.25" height="35.60" fill="#06a57b" stroke="#067b5d" stroke-width="1.8"/>
<rect x="2000.54" y="1493.19" width="7.25" height="43.50" fill="#fcd96a" stroke="#fda20e" stroke-width="1.8"/>
<rect x="2000.54" y="1537.09" width="7.25" height="30.61" fill="#ff5719" stroke="#cd2c02" stroke-width="1.8"/>
<rect x="2018.01" y="1337.35" width="7.25" height="55.57" fill="#c8e1fa" stroke="#8ab9fc" stroke-width="1.8"/>
<rect x="2018.01" y="1393.32" width="7.25" height="59.52" fill="#06a57b" stroke="#067b5d" stroke-width="1.8"/>
<rect x="2018.01" y="1453.25" width="7.25" height="75.55" fill="#fcd96a" stroke="#fda20e" stroke-width="1.8"/>
<rect x="2018.01" y="1529.19" width="7.25" height="38.51" fill="#ff5719" stroke="#cd2c02" stroke-width="1.8"/>
<rect x="2035.48" y="1391.47" width="7.25" height="33.28" fill="#c8e1fa" stroke="#8ab9fc" stroke-width="1.8"/>
<rect x="2035.48" y="1425.14" width="7.25" height="43.73" fill="#06a57b" stroke="#067b5d" stroke-width="1.8"/>
<rect x="2035.48" y="1469.27" width="7.25" height="73.46" fill="#fcd96a" stroke="#fda20e" stroke-width="1.8"/>
<rect x="2035.48" y="1543.13" width="7.25" height="24.57" fill="#ff5719" stroke="#cd2c02" stroke-width="1.8"/>
<rect x="2052.96" y="1405.40" width="7.25" height="19.34" fill="#c8e1fa" stroke="#8ab9fc" stroke-width="1.8"/>
<rect x="2052.96" y="1425.14" width="7.25" height="37.69" fill="#06a57b" stroke="#067b5d" stroke-width="1.8"/>
<rect x="2052.96" y="1463.23" width="7.25" height="69.51" fill="#fcd96a" stroke="#fda20e" stroke-width="1.8"/>
<rect x="2052.96" y="1533.14" width="7.25" height="34.56" fill="#ff5719" stroke="#cd2c02" stroke-width="1.8"/>
<rect x="2070.43" y="1401.45" width="7.25" height="25.38" fill="#c8e1fa" stroke="#8ab9fc" stroke-width="1.8"/>
<rect x="2070.43" y="1427.23" width="7.25" height="53.48" fill="#06a57b" stroke="#067b5d" stroke-width="1.8"/>
<rect x="2070.43" y="1481.12" width="7.25" height="29.56" fill="#fcd96a" stroke="#fda20e" stroke-width="1.8"/>
<rect x="2070.43" y="1511.08" width="7.25" height="56.62" fill="#ff5719" stroke="#cd2c02" stroke-width="1.8"/>
<rect x="2087.90" y="1403.31" width="7.25" height="37.46" fill="#c8e1fa" stroke="#8ab9fc" stroke-width="1.8"/>
<rect x="2087.90" y="1441.17" width="7.25" height="77.64" fill="#06a57b" stroke="#067b5d" stroke-width="1.8"/>
<rect x="2087.90" y="1519.21" width="7.25" height="27.47" fill="#fcd96a" stroke="#fda20e" stroke-width="1.8"/>
<rect x="2087.90" y="1547.08" width="7.25" height="20.62" fill="#ff5719" stroke="#cd2c02" stroke-width="1.8"/>
<rect x="2105.37" y="1357.56" width="7.25" height="49.30" fill="#c8e1fa" stroke="#8ab9fc" stroke-width="1.8"/>
<rect x="2105.37" y="1407.26" width="7.25" height="37.46" fill="#06a57b" stroke="#067b5d" stroke-width="1.8"/>
<rect x="2105.37" y="1445.12" width="7.25" height="75.55" fill="#fcd96a" stroke="#fda20e" stroke-width="1.8"/>
<rect x="2105.37" y="1521.07" width="7.25" height="46.63" fill="#ff5719" stroke="#cd2c02" stroke-width="1.8"/>
<rect x="2122.84" y="1355.47" width="7.25" height="75.32" fill="#c8e1fa" stroke="#8ab9fc" stroke-width="1.8"/>
<rect x="2122.84" y="1431.18" width="7.25" height="69.51" fill="#06a57b" stroke="#067b5d" stroke-width="1.8"/>
<rect x="2122.84" y="1501.09" width="7.25" height="39.78" fill="#fcd96a" stroke="#fda20e" stroke-width="1.8"/>
<rect x="2122.84" y="1541.27" width="7.25" height="26.43" fill="#ff5719" stroke="#cd2c02" stroke-width="1.8"/>
<rect x="2140.32" y="1395.42" width="7.25" height="47.44" fill="#c8e1fa" stroke="#8ab9fc" stroke-width="1.8"/>
<rect x="2140.32" y="1443.26" width="7.25" height="21.43" fill="#06a57b" stroke="#067b5d" stroke-width="1.8"/>
<rect x="2140.32" y="1465.09" width="7.25" height="77.64" fill="#fcd96a" stroke="#fda20e" stroke-width="1.8"/>
<rect x="2140.32" y="1543.13" width="7.25" height="24.57" fill="#ff5719" stroke="#cd2c02" stroke-width="1.8"/>
<rect x="2157.79" y="1347.34" width="7.25" height="57.43" fill="#c8e1fa" stroke="#8ab9fc" stroke-width="1.8"/>
<rect x="2157.79" y="1405.17" width="7.25" height="51.63" fill="#06a57b" stroke="#067b5d" stroke-width="1.8"/>
<rect x="2157.79" y="1457.20" width="7.25" height="35.60" fill="#fcd96a" stroke="#fda20e" stroke-width="1.8"/>
<rect x="2157.79" y="1493.19" width="7.25" height="74.51" fill="#ff5719" stroke="#cd2c02" stroke-width="1.8"/>
<rect x="2175.26" y="1377.30" width="7.25" height="75.55" fill="#c8e1fa" stroke="#8ab9fc" stroke-width="1.8"/>
<rect x="2175.26" y="1453.25" width="7.25" height="41.64" fill="#06a57b" stroke="#067b5d" stroke-width="1.8"/>
<rect x="2175.26" y="1495.28" width="7.25" height="49.53" fill="#fcd96a" stroke="#fda20e" stroke-width="1.8"/>
<rect x="2175.26" y="1545.22" width="7.25" height="22.48" fill="#ff5719" stroke="#cd2c02" stroke-width="1.8"/>
<rect x="2192.73" y="1371.49" width="7.25" height="33.28" fill="#c8e1fa" stroke="#8ab9fc" stroke-width="1.8"/>
<rect x="2192.73" y="1405.17" width="7.25" height="73.69" fill="#06a57b" stroke="#067b5d" stroke-width="1.8"/>
<rect x="2192.73" y="1479.26" width="7.25" height="49.53" fill="#fcd96a" stroke="#fda20e" stroke-width="1.8"/>
<rect x="2192.73" y="1529.19" width="7.25" height="38.51" fill="#ff5719" stroke="#cd2c02" stroke-width="1.8"/>
<rect x="2210.20" y="1413.30" width="7.25" height="29.56" fill="#c8e1fa" stroke="#8ab9fc" stroke-width="1.8"/>
<rect x="2210.20" y="1443.26" width="7.25" height="19.57" fill="#06a57b" stroke="#067b5d" stroke-width="1.8"/>
<rect x="2210.20" y="1463.23" width="7.25" height="35.60" fill="#fcd96a" stroke="#fda20e" stroke-width="1.8"/>
<rect x="2210.20" y="1499.23" width="7.25" height="68.47" fill="#ff5719" stroke="#cd2c02" stroke-width="1.8"/>
<rect x="2227.68" y="1381.48" width="7.25" height="23.29" fill="#c8e1fa" stroke="#8ab9fc" stroke-width="1.8"/>
<rect x="2227.68" y="1405.17" width="7.25" height="37.69" fill="#06a57b" stroke="#067b5d" stroke-width="1.8"/>
<rect x="2227.68" y="1443.26" width="7.25" height="47.44" fill="#fcd96a" stroke="#fda20e" stroke-width="1.8"/>
<rect x="2227.68" y="1491.10" width="7.25" height="76.60" fill="#ff5719" stroke="#cd2c02" stroke-width="1.8"/>
<rect x="2245.15" y="1313.43" width="7.25" height="57.43" fill="#c8e1fa" stroke="#8ab9fc" stroke-width="1.8"/>
<rect x="2245.15" y="1371.26" width="7.25" height="55.57" fill="#06a57b" stroke="#067b5d" stroke-width="1.8"/>
<rect x="2245.15" y="1427.23" width="7.25" height="73.46" fill="#fcd96a" stroke="#fda20e" stroke-width="1.8"/>
<rect x="2245.15" y="1501.09" width="7.25" height="66.61" fill="#ff5719" stroke="#cd2c02" stroke-width="1.8"/>
<rect x="2262.62" y="1373.35" width="7.25" height="69.51" fill="#c8e1fa" stroke="#8ab9fc" stroke-width="1.8"/>
<rect x="2262.62" y="1443.26" width="7.25" height="51.63" fill="#06a57b" stroke="#067b5d" stroke-width="1.8"/>
<rect x="2262.62" y="1495.28" width="7.25" height="51.39" fill="#fcd96a" stroke="#fda20e" stroke-width="1.8"/>
<rect x="2262.62" y="1547.08" width="7.25" height="20.62" fill="#ff5719" stroke="#cd2c02" stroke-width="1.8"/>
<rect x="2280.09" y="1359.42" width="7.25" height="53.48" fill="#c8e1fa" stroke="#8ab9fc" stroke-width="1.8"/>
<rect x="2280.09" y="1413.30" width="7.25" height="55.57" fill="#06a57b" stroke="#067b5d" stroke-width="1.8"/>
<rect x="2280.09" y="1469.27" width="7.25" height="35.37" fill="#fcd96a" stroke="#fda20e" stroke-width="1.8"/>
<rect x="2280.09" y="1505.04" width="7.25" height="62.66" fill="#ff5719" stroke="#cd2c02" stroke-width="1.8"/>
<rect x="2297.56" y="1417.48" width="7.25" height="55.34" fill="#c8e1fa" stroke="#8ab9fc" stroke-width="1.8"/>
<rect x="2297.56" y="1473.22" width="7.25" height="49.53" fill="#06a57b" stroke="#067b5d" stroke-width="1.8"/>
<rect x="2297.56" y="1523.16" width="7.25" height="19.57" fill="#fcd96a" stroke="#fda20e" stroke-width="1.8"/>
<rect x="2297.56" y="1543.13" width="7.25" height="24.57" fill="#ff5719" stroke="#cd2c02" stroke-width="1.8"/>
<rect x="2315.04" y="1405.40" width="7.25" height="39.32" fill="#c8e1fa" stroke="#8ab9fc" stroke-width="1.8"/>
<rect x="2315.04" y="1445.12" width="7.25" height="45.59" fill="#06a57b" stroke="#067b5d" stroke-width="1.8"/>
<rect x="2315.04" y="1491.10" width="7.25" height="37.69" fill="#fcd96a" stroke="#fda20e" stroke-width="1.8"/>
<rect x="2315.04" y="1529.19" width="7.25" height="38.51" fill="#ff5719" stroke="#cd2c02" stroke-width="1.8"/>
<rect x="2332.51" y="1355.47" width="7.25" height="67.42" fill="#c8e1fa" stroke="#8ab9fc" stroke-width="1.8"/>
<rect x="2332.51" y="1423.29" width="7.25" height="45.59" fill="#06a57b" stroke="#067b5d" stroke-width="1.8"/>
<rect x="2332.51" y="1469.27" width="7.25" height="21.43" fill="#fcd96a" stroke="#fda20e" stroke-width="1.8"/>
<rect x="2332.51" y="1491.10" width="7.25" height="76.60" fill="#ff5719" stroke="#cd2c02" stroke-width="1.8"/>
<rect x="2349.98" y="1399.36" width="7.25" height="57.43" fill="#c8e1fa" stroke="#8ab9fc" stroke-width="1.8"/>
<rect x="2349.98" y="1457.20" width="7.25" height="27.70" fill="#06a57b" stroke="#067b5d" stroke-width="1.8"/>
<rect x="2349.98" y="1485.30" width="7.25" height="49.53" fill="#fcd96a" stroke="#fda20e" stroke-width="1.8"/>
<rect x="2349.98" y="1535.23" width="7.25" height="32.47" fill="#ff5719" stroke="#cd2c02" stroke-width="1.8"/>
<rect x="2367.45" y="1383.34" width="7.25" height="53.48" fill="#c8e1fa" stroke="#8ab9fc" stroke-width="1.8"/>
<rect x="2367.45" y="1437.22" width="7.25" height="73.46" fill="#06a57b" stroke="#067b5d" stroke-width="1.8"/>
<rect x="2367.45" y="1511.08" width="7.25" height="27.70" fill="#fcd96a" stroke="#fda20e" stroke-width="1.8"/>
<rect x="2367.45" y="1539.18" width="7.25" height="28.52" fill="#ff5719" stroke="#cd2c02" stroke-width="1.8"/>
<rect x="2384.92" y="1403.31" width="7.25" height="37.46" fill="#c8e1fa" stroke="#8ab9fc" stroke-width="1.8"/>
<rect x="2384.92" y="1441.17" width="7.25" height="41.64" fill="#06a57b" stroke="#067b5d" stroke-width="1.8"/>
<rect x="2384.92" y="1483.21" width="7.25" height="63.47" fill="#fcd96a" stroke="#fda20e" stroke-width="1.8"/>
<rect x="2384.92" y="1547.08" width="7.25" height="20.62" fill="#ff5719" stroke="#cd2c02" stroke-width="1.8"/>
<rect x="2402.40" y="1383.34" width="7.25" height="31.42" fill="#c8e1fa" stroke="#8ab9fc" stroke-width="1.8"/>
<rect x="2402.40" y="1415.16" width="7.25" height="49.53" fill="#06a57b" stroke="#067b5d" stroke-width="1.8"/>
<rect x="2402.40" y="1465.09" width="7.25" height="25.61" fill="#fcd96a" stroke="#fda20e" stroke-width="1.8"/>
<rect x="2402.40" y="1491.10" width="7.25" height="76.60" fill="#ff5719" stroke="#cd2c02" stroke-width="1.8"/>
<rect x="2419.87" y="1351.29" width="7.25" height="49.53" fill="#c8e1fa" stroke="#8ab9fc" stroke-width="1.8"/>
<rect x="2419.87" y="1401.22" width="7.25" height="21.66" fill="#06a57b" stroke="#067b5d" stroke-width="1.8"/>
<rect x="2419.87" y="1423.29" width="7.25" height="77.41" fill="#fcd96a" stroke="#fda20e" stroke-width="1.8"/>
<rect x="2419.87" y="1501.09" width="7.25" height="66.61" fill="#ff5719" stroke="#cd2c02" stroke-width="1.8"/>
<rect x="2437.34" y="1383.34" width="7.25" height="49.53" fill="#c8e1fa" stroke="#8ab9fc" stroke-width="1.8"/>
<rect x="2437.34" y="1433.27" width="7.25" height="31.42" fill="#06a57b" stroke="#067b5d" stroke-width="1.8"/>
<rect x="2437.34" y="1465.09" width="7.25" height="45.59" fill="#fcd96a" stroke="#fda20e" stroke-width="1.8"/>
<rect x="2437.34" y="1511.08" width="7.25" height="56.62" fill="#ff5719" stroke="#cd2c02" stroke-width="1.8"/>
<rect x="2454.81" y="1405.40" width="7.25" height="53.48" fill="#c8e1fa" stroke="#8ab9fc" stroke-width="1.8"/>
<rect x="2454.81" y="1459.29" width="7.25" height="27.47" fill="#06a57b" stroke="#067b5d" stroke-width="1.8"/>
<rect x="2454.81" y="1487.16" width="7.25" height="43.50" fill="#fcd96a" stroke="#fda20e" stroke-width="1.8"/>
<rect x="2454.81" y="1531.05" width="7.25" height="36.65" fill="#ff5719" stroke="#cd2c02" stroke-width="1.8"/>
<rect x="2472.28" y="1415.39" width="7.25" height="23.29" fill="#c8e1fa" stroke="#8ab9fc" stroke-width="1.8"/>
<rect x="2472.28" y="1439.08" width="7.25" height="25.61" fill="#06a57b" stroke="#067b5d" stroke-width="1.8"/>
<rect x="2472.28" y="1465.09" width="7.25" height="55.57" fill="#fcd96a" stroke="#fda20e" stroke-width="1.8"/>
<rect x="2472.28" y="1521.07" width="7.25" height="46.63" fill="#ff5719" stroke="#cd2c02" stroke-width="1.8"/>
<rect x="2489.76" y="1387.29" width="7.25" height="39.55" fill="#c8e1fa" stroke="#8ab9fc" stroke-width="1.8"/>
<rect x="2489.76" y="1427.23" width="7.25" height="25.61" fill="#06a57b" stroke="#067b5d" stroke-width="1.8"/>
<rect x="2489.76" y="1453.25" width="7.25" height="45.59" fill="#fcd96a" stroke="#fda20e" stroke-width="1.8"/>
<rect x="2489.76" y="1499.23" width="7.25" height="68.47" fill="#ff5719" stroke="#cd2c02" stroke-width="1.8"/>
<rect x="2507.23" y="1467.41" width="7.25" height="23.29" fill="#c8e1fa" stroke="#8ab9fc" stroke-width="1.8"/>
<rect x="2507.23" y="1491.10" width="7.25" height="19.57" fill="#06a57b" stroke="#067b5d" stroke-width="1.8"/>
<rect x="2507.23" y="1511.08" width="7.25" height="33.74" fill="#fcd96a" stroke="#fda20e" stroke-width="1.8"/>
<rect x="2507.23" y="1545.22" width="7.25" height="22.48" fill="#ff5719" stroke="#cd2c02" stroke-width="1.8"/>
<rect x="2524.70" y="1459.29" width="7.25" height="19.57" fill="#c8e1fa" stroke="#8ab9fc" stroke-width="1.8"/>
<rect x="2524.70" y="1479.26" width="7.25" height="39.55" fill="#06a57b" stroke="#067b5d" stroke-width="1.8"/>
<rect x="2524.70" y="1519.21" width="7.25" height="23.52" fill="#fcd96a" stroke="#fda20e" stroke-width="1.8"/>
<rect x="2524.70" y="1543.13" width="7.25" height="24.57" fill="#ff5719" stroke="#cd2c02" stroke-width="1.8"/>
<rect x="2542.17" y="1417.48" width="7.25" height="23.29" fill="#c8e1fa" stroke="#8ab9fc" stroke-width="1.8"/>
<rect x="2542.17" y="1441.17" width="7.25" height="29.56" fill="#06a57b" stroke="#067b5d" stroke-width="1.8"/>
<rect x="2542.17" y="1471.13" width="7.25" height="51.63" fill="#fcd96a" stroke="#fda20e" stroke-width="1.8"/>
<rect x="2542.17" y="1523.16" width="7.25" height="44.54" fill="#ff5719" stroke="#cd2c02" stroke-width="1.8"/>
<rect x="2559.64" y="1423.29" width="7.25" height="19.57" fill="#c8e1fa" stroke="#8ab9fc" stroke-width="1.8"/>
<rect x="2559.64" y="1443.26" width="7.25" height="33.51" fill="#06a57b" stroke="#067b5d" stroke-width="1.8"/>
<rect x="2559.64" y="1477.17" width="7.25" height="25.61" fill="#fcd96a" stroke="#fda20e" stroke-width="1.8"/>
<rect x="2559.64" y="1503.18" width="7.25" height="64.52" fill="#ff5719" stroke="#cd2c02" stroke-width="1.8"/>
<rect x="2577.12" y="1377.30" width="7.25" height="59.52" fill="#c8e1fa" stroke="#8ab9fc" stroke-width="1.8"/>
<rect x="2577.12" y="1437.22" width="7.25" height="45.59" fill="#06a57b" stroke="#067b5d" stroke-width="1.8"/>
<rect x="2577.12" y="1483.21" width="7.25" height="49.53" fill="#fcd96a" stroke="#fda20e" stroke-width="1.8"/>
<rect x="2577.12" y="1533.14" width="7.25" height="34.56" fill="#ff5719" stroke="#cd2c02" stroke-width="1.8"/>
<rect x="2594.59" y="1391.47" width="7.25" height="33.28" fill="#c8e1fa" stroke="#8ab9fc" stroke-width="1.8"/>
<rect x="2594.59" y="1425.14" width="7.25" height="55.57" fill="#06a57b" stroke="#067b5d" stroke-width="1.8"/>
<rect x="2594.59" y="1481.12" width="7.25" height="43.73" fill="#fcd96a" stroke="#fda20e" stroke-width="1.8"/>
<rect x="2594.59" y="1525.25" width="7.25" height="42.45" fill="#ff5719" stroke="#cd2c02" stroke-width="1.8"/>
<rect x="2612.06" y="1331.31" width="7.25" height="35.37" fill="#c8e1fa" stroke="#8ab9fc" stroke-width="1.8"/>
<rect x="2612.06" y="1367.08" width="7.25" height="67.65" fill="#06a57b" stroke="#067b5d" stroke-width="1.8"/>
<rect x="2612.06" y="1435.13" width="7.25" height="63.70" fill="#fcd96a" stroke="#fda20e" stroke-width="1.8"/>
<rect x="2612.06" y="1499.23" width="7.25" height="68.47" fill="#ff5719" stroke="#cd2c02" stroke-width="1.8"/>
<rect x="2629.53" y="1365.45" width="7.25" height="65.33" fill="#c8e1fa" stroke="#8ab9fc" stroke-width="1.8"/>
<rect x="2629.53" y="1431.18" width="7.25" height="75.55" fill="#06a57b" stroke="#067b5d" stroke-width="1.8"/>
<rect x="2629.53" y="1507.13" width="7.25" height="31.65" fill="#fcd96a" stroke="#fda20e" stroke-width="1.8"/>
<rect x="2629.53" y="1539.18" width="7.25" height="28.52" fill="#ff5719" stroke="#cd2c02" stroke-width="1.8"/>
<rect x="2647.00" y="1355.47" width="7.25" height="31.42" fill="#c8e1fa" stroke="#8ab9fc" stroke-width="1.8"/>
<rect x="2647.00" y="1387.29" width="7.25" height="77.41" fill="#06a57b" stroke="#067b5d" stroke-width="1.8"/>
<rect x="2647.00" y="1465.09" width="7.25" height="39.55" fill="#fcd96a" stroke="#fda20e" stroke-width="1.8"/>
<rect x="2647.00" y="1505.04" width="7.25" height="62.66" fill="#ff5719" stroke="#cd2c02" stroke-width="1.8"/>
<rect x="2664.48" y="1361.27" width="7.25" height="65.56" fill="#c8e1fa" stroke="#8ab9fc" stroke-width="1.8"/>
<rect x="2664.48" y="1427.23" width="7.25" height="51.63" fill="#06a57b" stroke="#067b5d" stroke-width="1.8"/>
<rect x="2664.48" y="1479.26" width="7.25" height="57.43" fill="#fcd96a" stroke="#fda20e" stroke-width="1.8"/>
<rect x="2664.48" y="1537.09" width="7.25" height="30.61" fill="#ff5719" stroke="#cd2c02" stroke-width="1.8"/>
<rect x="2681.95" y="1397.27" width="7.25" height="63.47" fill="#c8e1fa" stroke="#8ab9fc" stroke-width="1.8"/>
<rect x="2681.95" y="1461.14" width="7.25" height="35.60" fill="#06a57b" stroke="#067b5d" stroke-width="1.8"/>
<rect x="2681.95" y="1497.14" width="7.25" height="45.59" fill="#fcd96a" stroke="#fda20e" stroke-width="1.8"/>
<rect x="2681.95" y="1543.13" width="7.25" height="24.57" fill="#ff5719" stroke="#cd2c02" stroke-width="1.8"/>
</svg>
<div class="t" style="left:2717.00px;top:329.01px;font-size:20.8px;line-height:20.8px;color:#806a6a;font-family:'Liberation Sans',sans-serif;letter-spacing:-0.445px;">100</div>
<div class="t" style="left:2717.00px;top:417.01px;font-size:20.8px;line-height:20.8px;color:#806a6a;font-family:'Liberation Sans',sans-serif;letter-spacing:-0.445px;">90</div>
<div class="t" style="left:2717.00px;top:505.01px;font-size:20.8px;line-height:20.8px;color:#806a6a;font-family:'Liberation Sans',sans-serif;letter-spacing:-0.445px;">80</div>
<div class="t" style="left:2717.00px;top:592.01px;font-size:20.8px;line-height:20.8px;color:#806a6a;font-family:'Liberation Sans',sans-serif;letter-spacing:-0.445px;">70</div>
<div class="t" style="left:2717.00px;top:680.01px;font-size:20.8px;line-height:20.8px;color:#806a6a;font-family:'Liberation Sans',sans-serif;letter-spacing:-0.445px;">60</div>
<div class="t" style="left:1666.80px;top:769.01px;font-size:20.8px;line-height:20.8px;color:#806a6a;font-family:'Liberation Sans',sans-serif;letter-spacing:0.31px;">27 giugno</div>
<div class="t" style="left:1841.43px;top:769.01px;font-size:20.8px;line-height:20.8px;color:#806a6a;font-family:'Liberation Sans',sans-serif;letter-spacing:0.383px;">2 luglio</div>
<div class="t" style="left:2016.06px;top:769.01px;font-size:20.8px;line-height:20.8px;color:#806a6a;font-family:'Liberation Sans',sans-serif;letter-spacing:0.383px;">7 luglio</div>
<div class="t" style="left:2190.69px;top:769.01px;font-size:20.8px;line-height:20.8px;color:#806a6a;font-family:'Liberation Sans',sans-serif;letter-spacing:0.369px;">12 luglio</div>
<div class="t" style="left:2365.32px;top:769.01px;font-size:20.8px;line-height:20.8px;color:#806a6a;font-family:'Liberation Sans',sans-serif;letter-spacing:0.369px;">17 luglio</div>
<div class="t" style="left:2539.95px;top:769.01px;font-size:20.8px;line-height:20.8px;color:#806a6a;font-family:'Liberation Sans',sans-serif;letter-spacing:0.369px;">22 luglio</div>
<div class="t" style="left:1651.00px;top:865.00px;font-size:24.96px;line-height:24.96px;color:#1f1b1c;font-family:'Liberation Sans',sans-serif;letter-spacing:0.455px;">Visite totali: 25.323</div>
<div class="t" style="left:1651.00px;top:1027.01px;font-size:41.6px;line-height:41.6px;color:#1f1b1c;font-family:'Liberation Sans',sans-serif;font-weight:700;letter-spacing:-0.61px;">Tempo complessivo della transazione</div>
<div class="t" style="left:2717.00px;top:1147.01px;font-size:20.8px;line-height:20.8px;color:#806a6a;font-family:'Liberation Sans',sans-serif;letter-spacing:0.063px;">100 ms</div>
<div class="t" style="left:2717.00px;top:1235.01px;font-size:20.8px;line-height:20.8px;color:#806a6a;font-family:'Liberation Sans',sans-serif;letter-spacing:0.064px;">90 ms</div>
<div class="t" style="left:2717.00px;top:1322.01px;font-size:20.8px;line-height:20.8px;color:#806a6a;font-family:'Liberation Sans',sans-serif;letter-spacing:0.064px;">80 ms</div>
<div class="t" style="left:2717.00px;top:1410.01px;font-size:20.8px;line-height:20.8px;color:#806a6a;font-family:'Liberation Sans',sans-serif;letter-spacing:0.064px;">70 ms</div>
<div class="t" style="left:2717.00px;top:1498.01px;font-size:20.8px;line-height:20.8px;color:#806a6a;font-family:'Liberation Sans',sans-serif;letter-spacing:0.064px;">60 ms</div>
<div class="t" style="left:1666.80px;top:1587.01px;font-size:20.8px;line-height:20.8px;color:#806a6a;font-family:'Liberation Sans',sans-serif;letter-spacing:0.31px;">27 giugno</div>
<div class="t" style="left:1841.43px;top:1587.01px;font-size:20.8px;line-height:20.8px;color:#806a6a;font-family:'Liberation Sans',sans-serif;letter-spacing:0.383px;">2 luglio</div>
<div class="t" style="left:2016.06px;top:1587.01px;font-size:20.8px;line-height:20.8px;color:#806a6a;font-family:'Liberation Sans',sans-serif;letter-spacing:0.383px;">7 luglio</div>
<div class="t" style="left:2190.69px;top:1587.01px;font-size:20.8px;line-height:20.8px;color:#806a6a;font-family:'Liberation Sans',sans-serif;letter-spacing:0.369px;">12 luglio</div>
<div class="t" style="left:2365.32px;top:1587.01px;font-size:20.8px;line-height:20.8px;color:#806a6a;font-family:'Liberation Sans',sans-serif;letter-spacing:0.369px;">17 luglio</div>
<div class="t" style="left:2539.95px;top:1587.01px;font-size:20.8px;line-height:20.8px;color:#806a6a;font-family:'Liberation Sans',sans-serif;letter-spacing:0.369px;">22 luglio</div>
<div class="t" style="left:1699.40px;top:1674.00px;font-size:29.12px;line-height:29.12px;color:#806a6a;font-family:'Liberation Sans',sans-serif;letter-spacing:0.134px;">Tecnologia</div>
<div class="t" style="left:2183.40px;top:1674.00px;font-size:29.12px;line-height:29.12px;color:#806a6a;font-family:'Liberation Sans',sans-serif;letter-spacing:0.258px;width:600.79px;text-align:right;margin-right:-0.258px;">Tempo complessivo della transazione</div>
<div class="a" style="left:1650px;top:1741.5px;width:1182px;height:2px;background:#c8b0ab;"></div>
<div class="a" style="left:1698px;top:1804px;width:24px;height:24px;background:#ff5a14;border:1.5px solid #d9420c;border-radius:50%;"></div>
<div class="t" style="left:1739.40px;top:1802.00px;font-size:29.12px;line-height:29.12px;color:#1f1b1c;font-family:'Liberation Sans',sans-serif;letter-spacing:-1.768px;">PHP</div>
<div class="t" style="left:2483.40px;top:1802.00px;font-size:29.12px;line-height:29.12px;color:#1f1b1c;font-family:'Liberation Sans',sans-serif;letter-spacing:-0.669px;width:299.9px;text-align:right;margin-right:0.669px;">21,2 ms</div>
</div></body></html>
